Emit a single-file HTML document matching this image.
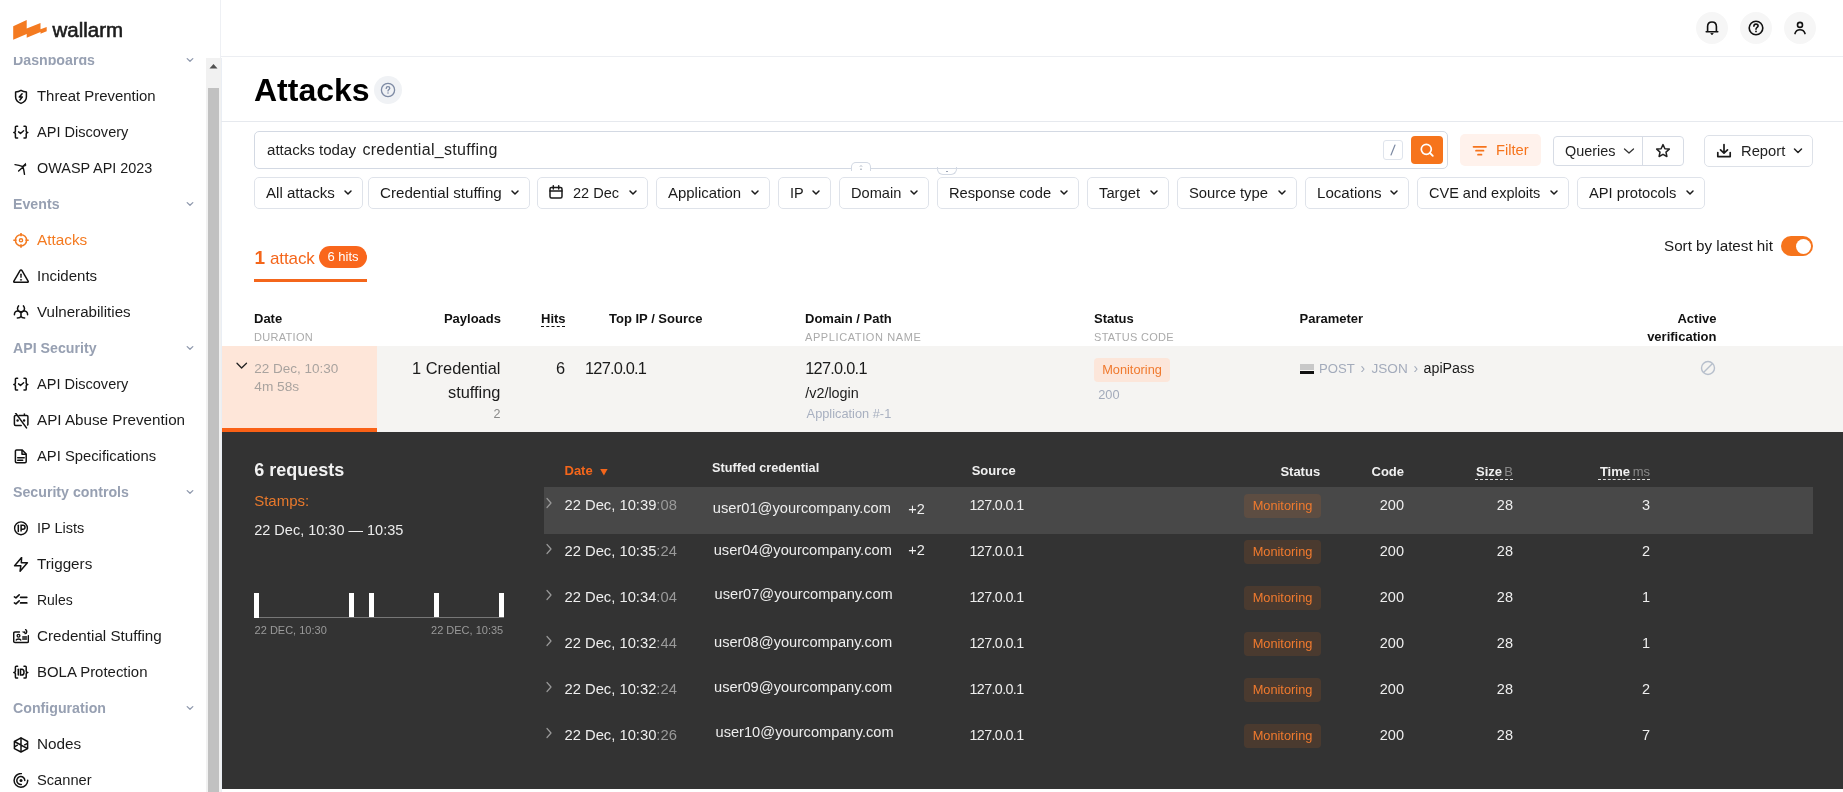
<!DOCTYPE html>
<html><head><meta charset="utf-8"><title>Attacks</title>
<style>
html,body{margin:0;padding:0;}
body{will-change:transform;width:1843px;height:792px;overflow:hidden;position:relative;background:#fff;font-family:"Liberation Sans", sans-serif;}
.t{position:absolute;white-space:pre;line-height:1;}
.r{position:absolute;box-sizing:border-box;}
</style></head><body>
<div class="r" style="left:220px;top:0px;width:1px;height:792px;background:#eef0f4;"></div>
<svg class="r" style="left:0px;top:0px;" width="60" height="50" viewBox="0 0 60 50" fill="none"><polygon fill="#f47a20" points="13.2,26.2 26.7,20.1 26.7,28.6 40.5,23 40.5,29.2 46.7,26.9 46.7,31.3 40.5,33.75 40.5,32 26.7,37.7 26.7,33.9 13.2,39.8"/></svg>
<div class="t" style="top:20px;font-size:20.5px;color:#1c1c1c;font-weight:400;left:52.5px;-webkit-text-stroke:0.6px #1c1c1c;">wallarm</div>
<div class="t" style="top:53px;font-size:14.2px;color:#97a0b2;font-weight:700;left:13px;transform-origin:0 100%;transform:scaleY(1.08);">Dashboards</div>
<svg class="r" style="left:184px;top:56px;" width="12" height="8" viewBox="0 0 12 8" fill="none"><path d="M3.2 2.6 L6 5.3 L8.8 2.6" stroke="#8f99ad" stroke-width="1.3" stroke-linecap="round" stroke-linejoin="round"/></svg>
<div class="t" style="top:89px;font-size:14.93px;color:#1b1b1b;font-weight:400;left:37px;">Threat Prevention</div>
<svg class="r" style="left:13px;top:88.5px;" width="16" height="16" viewBox="0 0 16 16" fill="none"><path d="M8 1.3 C6.3 2.4 4.4 2.9 2.6 3 V8 C2.6 11 5 13.3 8 14.4 C11 13.3 13.4 11 13.4 8 V3 C11.6 2.9 9.7 2.4 8 1.3 Z" stroke="#111" stroke-width="1.5" stroke-linejoin="round"/><path d="M9.1 4.8 L6.3 8.1 H9.3 L6.9 10.9" stroke="#111" stroke-width="1.5" stroke-linejoin="round" stroke-linecap="round"/></svg>
<div class="t" style="top:125px;font-size:14.56px;color:#1b1b1b;font-weight:400;left:37px;">API Discovery</div>
<svg class="r" style="left:13px;top:124.5px;" width="16" height="16" viewBox="0 0 16 16" fill="none"><path d="M4.6 1.2 H3.3 C2.8 1.2 2.4 1.6 2.4 2.1 V6.3 C2.4 7 2 7.5 0.8 7.5 C2 7.5 2.4 8 2.4 8.7 V12.2 C2.4 12.7 2.8 13.1 3.3 13.1 H4.6 M11 1.2 H12.3 C12.8 1.2 13.2 1.6 13.2 2.1 V6.3 C13.2 7 13.6 7.5 14.8 7.5 C13.6 7.5 13.2 8 13.2 8.7 V12.2 C13.2 12.7 12.8 13.1 12.3 13.1 H11" stroke="#111" stroke-width="1.5" stroke-linecap="round" stroke-linejoin="round"/><path d="M5.6 6.9 L7.5 8.5 L10.6 5.8" stroke="#111" stroke-width="1.5" stroke-linecap="round" stroke-linejoin="round"/></svg>
<div class="t" style="top:161px;font-size:14.42px;color:#1b1b1b;font-weight:400;left:37px;">OWASP API 2023</div>
<svg class="r" style="left:13px;top:160.5px;" width="16" height="16" viewBox="0 0 16 16" fill="none"><path d="M2 3.6 C5 3.9 7.5 4.6 10 5.6 M5.6 10 L9.8 6.2 M10 6 C10.8 8.5 11.2 11 11.5 13.3" stroke="#111" stroke-width="1.4" stroke-linecap="round"/><path d="M9 5.8 L12.5 2.4 L12.8 4.6 Z" fill="#111" stroke="#111" stroke-width="1" stroke-linejoin="round"/></svg>
<div class="t" style="top:197px;font-size:14.2px;color:#97a0b2;font-weight:700;left:13px;transform-origin:0 100%;transform:scaleY(1.08);">Events</div>
<svg class="r" style="left:184px;top:200px;" width="12" height="8" viewBox="0 0 12 8" fill="none"><path d="M3.2 2.6 L6 5.3 L8.8 2.6" stroke="#8f99ad" stroke-width="1.3" stroke-linecap="round" stroke-linejoin="round"/></svg>
<div class="t" style="top:232px;font-size:15.33px;color:#f47a20;font-weight:400;left:37px;">Attacks</div>
<svg class="r" style="left:13px;top:232.5px;" width="16" height="16" viewBox="0 0 16 16" fill="none"><circle cx="8" cy="7.3" r="5.6" stroke="#f47a20" stroke-width="1.5"/><circle cx="8" cy="7.3" r="1.6" stroke="#f47a20" stroke-width="1.4"/><path d="M8 0 V3.3 M8 11.3 V14.8 M0.3 7.3 H3.6 M12.4 7.3 H15.7" stroke="#f47a20" stroke-width="1.6"/></svg>
<div class="t" style="top:268px;font-size:15.03px;color:#1b1b1b;font-weight:400;left:37px;">Incidents</div>
<svg class="r" style="left:13px;top:268.5px;" width="16" height="16" viewBox="0 0 16 16" fill="none"><path d="M7 1.6 C7.4 0.9 8.6 0.9 9 1.6 L15.1 12.2 C15.5 12.9 15 13.3 14.4 13.3 H1.6 C1 13.3 0.5 12.9 0.9 12.2 Z" stroke="#111" stroke-width="1.5" stroke-linejoin="round"/><path d="M8 5.2 V8.2" stroke="#111" stroke-width="1.4" stroke-linecap="round"/><path d="M7.4 10.8 H8.6" stroke="#111" stroke-width="1.2" stroke-linecap="round"/></svg>
<div class="t" style="top:304px;font-size:15.13px;color:#1b1b1b;font-weight:400;left:37px;">Vulnerabilities</div>
<svg class="r" style="left:13px;top:304.5px;" width="16" height="16" viewBox="0 0 16 16" fill="none"><path d="M5.5 0.9 C4 2.6 4.2 5.5 6.3 6.6 C7.3 7.1 8.7 7.1 9.7 6.6 C11.8 5.5 12 2.6 10.5 0.9" stroke="#111" stroke-width="1.5" stroke-linecap="round"/><path d="M1.4 9.8 C1.3 7.3 3.1 5.6 5.2 6 C6.4 6.2 7.5 6.8 8 7.2 C8.5 6.8 9.6 6.2 10.8 6 C12.9 5.6 14.7 7.3 14.6 9.8" stroke="#111" stroke-width="1.5" stroke-linecap="round"/><path d="M8 7 V11.5 M4.4 13 C6 13 7.5 12.5 8 11.3 C8.5 12.5 10 13 11.6 13" stroke="#111" stroke-width="1.6" stroke-linecap="round"/></svg>
<div class="t" style="top:341px;font-size:14.2px;color:#97a0b2;font-weight:700;left:13px;transform-origin:0 100%;transform:scaleY(1.08);">API Security</div>
<svg class="r" style="left:184px;top:344px;" width="12" height="8" viewBox="0 0 12 8" fill="none"><path d="M3.2 2.6 L6 5.3 L8.8 2.6" stroke="#8f99ad" stroke-width="1.3" stroke-linecap="round" stroke-linejoin="round"/></svg>
<div class="t" style="top:377px;font-size:14.56px;color:#1b1b1b;font-weight:400;left:37px;">API Discovery</div>
<svg class="r" style="left:13px;top:376.5px;" width="16" height="16" viewBox="0 0 16 16" fill="none"><path d="M4.6 1.2 H3.3 C2.8 1.2 2.4 1.6 2.4 2.1 V6.3 C2.4 7 2 7.5 0.8 7.5 C2 7.5 2.4 8 2.4 8.7 V12.2 C2.4 12.7 2.8 13.1 3.3 13.1 H4.6 M11 1.2 H12.3 C12.8 1.2 13.2 1.6 13.2 2.1 V6.3 C13.2 7 13.6 7.5 14.8 7.5 C13.6 7.5 13.2 8 13.2 8.7 V12.2 C13.2 12.7 12.8 13.1 12.3 13.1 H11" stroke="#111" stroke-width="1.5" stroke-linecap="round" stroke-linejoin="round"/><path d="M5.6 6.9 L7.5 8.5 L10.6 5.8" stroke="#111" stroke-width="1.5" stroke-linecap="round" stroke-linejoin="round"/></svg>
<div class="t" style="top:412px;font-size:15.23px;color:#1b1b1b;font-weight:400;left:37px;">API Abuse Prevention</div>
<svg class="r" style="left:13px;top:412.5px;" width="16" height="16" viewBox="0 0 16 16" fill="none"><path d="M3.2 2.4 H2.6 C2 2.4 1.4 3 1.4 3.6 V11.2 C1.4 11.8 2 12.4 2.6 12.4 H8.2 M6 2.4 H13.7 C14.3 2.4 14.9 3 14.9 3.6 V11.2 C14.9 11.5 14.8 11.8 14.6 12" stroke="#111" stroke-width="1.5" stroke-linecap="round"/><path d="M11.4 2.4 V0.4" stroke="#111" stroke-width="1.4"/><path d="M2.4 -0.2 L13.5 14.9" stroke="#111" stroke-width="1.5" stroke-linecap="round"/><circle cx="4.6" cy="7.5" r="1.2" fill="#111"/><circle cx="11.1" cy="7.5" r="1.2" fill="#111"/></svg>
<div class="t" style="top:449px;font-size:14.79px;color:#1b1b1b;font-weight:400;left:37px;">API Specifications</div>
<svg class="r" style="left:13px;top:448.5px;" width="16" height="16" viewBox="0 0 16 16" fill="none"><path d="M3.6 0.9 H9 L13.2 5 V12.6 C13.2 13.3 12.7 13.8 12 13.8 H3.6 C2.9 13.8 2.4 13.3 2.4 12.6 V2.1 C2.4 1.4 2.9 0.9 3.6 0.9 Z" stroke="#111" stroke-width="1.5" stroke-linejoin="round"/><path d="M9 0.9 V5.3 H13.2" stroke="#111" stroke-width="1.5" stroke-linejoin="round"/><path d="M4.7 8.8 H11.2 M4.7 11.3 H9.7" stroke="#111" stroke-width="1.5" stroke-linecap="round"/></svg>
<div class="t" style="top:485px;font-size:14.2px;color:#97a0b2;font-weight:700;left:13px;transform-origin:0 100%;transform:scaleY(1.08);">Security controls</div>
<svg class="r" style="left:184px;top:488px;" width="12" height="8" viewBox="0 0 12 8" fill="none"><path d="M3.2 2.6 L6 5.3 L8.8 2.6" stroke="#8f99ad" stroke-width="1.3" stroke-linecap="round" stroke-linejoin="round"/></svg>
<div class="t" style="top:521px;font-size:14.49px;color:#1b1b1b;font-weight:400;left:37px;">IP Lists</div>
<svg class="r" style="left:13px;top:520.5px;" width="16" height="16" viewBox="0 0 16 16" fill="none"><circle cx="8" cy="7.3" r="6.4" stroke="#111" stroke-width="1.4"/><path d="M5.3 4.3 V10.6" stroke="#111" stroke-width="1.5" stroke-linecap="round"/><path d="M8.1 10.6 V4.3 H10 C11.3 4.3 12 5.1 12 6.3 C12 7.5 11.3 8.3 10 8.3 H8.1" stroke="#111" stroke-width="1.5"/></svg>
<div class="t" style="top:556px;font-size:15.22px;color:#1b1b1b;font-weight:400;left:37px;">Triggers</div>
<svg class="r" style="left:13px;top:556.5px;" width="16" height="16" viewBox="0 0 16 16" fill="none"><path d="M8.6 0.5 L1.6 8.8 H7.8 L7.1 14.2 L14.4 5.8 H8.3 Z" stroke="#111" stroke-width="1.5" stroke-linejoin="round"/></svg>
<div class="t" style="top:594px;font-size:13.97px;color:#1b1b1b;font-weight:400;left:37px;">Rules</div>
<svg class="r" style="left:13px;top:592.5px;" width="16" height="16" viewBox="0 0 16 16" fill="none"><path d="M1.4 3.9 L2.9 4.9 L6.2 1.9 M1.4 9.9 L2.9 10.9 L6.2 7.9" stroke="#111" stroke-width="1.6" stroke-linecap="round" stroke-linejoin="round"/><path d="M7.6 4.3 H13.8 M7.6 9.9 H13.8" stroke="#111" stroke-width="1.7" stroke-linecap="round"/></svg>
<div class="t" style="top:628px;font-size:15.19px;color:#1b1b1b;font-weight:400;left:37px;">Credential Stuffing</div>
<svg class="r" style="left:13px;top:628.5px;" width="16" height="16" viewBox="0 0 16 16" fill="none"><path d="M6.4 3 H2 C1.2 3 0.7 3.5 0.7 4.3 V12.2 C0.7 13 1.2 13.5 2 13.5 H14.1 C14.9 13.5 15.4 13 15.4 12.2 V6.8" stroke="#111" stroke-width="1.5" stroke-linecap="round"/><circle cx="5.5" cy="6.8" r="1.4" stroke="#111" stroke-width="1.3"/><path d="M3.2 11 C3.6 9.6 7.4 9.6 7.8 11" stroke="#111" stroke-width="1.4" stroke-linecap="round"/><path d="M9.7 8 H13.6 M9.7 10 H13.6" stroke="#111" stroke-width="1.4" stroke-linecap="round"/><path d="M12.6 0.7 C14.2 1.5 14.1 4.4 12.2 4.6" stroke="#111" stroke-width="1.4" stroke-linecap="round"/><path d="M8.6 2.7 L12.4 4.8 L12.3 2.2 Z" fill="#111"/></svg>
<div class="t" style="top:665px;font-size:14.94px;color:#1b1b1b;font-weight:400;left:37px;">BOLA Protection</div>
<svg class="r" style="left:13px;top:664.5px;" width="16" height="16" viewBox="0 0 16 16" fill="none"><path d="M4.6 1.2 H3.3 C2.8 1.2 2.4 1.6 2.4 2.1 V6.3 C2.4 7 2 7.5 0.8 7.5 C2 7.5 2.4 8 2.4 8.7 V12.2 C2.4 12.7 2.8 13.1 3.3 13.1 H4.6 M11 1.2 H12.3 C12.8 1.2 13.2 1.6 13.2 2.1 V6.3 C13.2 7 13.6 7.5 14.8 7.5 C13.6 7.5 13.2 8 13.2 8.7 V12.2 C13.2 12.7 12.8 13.1 12.3 13.1 H11" stroke="#111" stroke-width="1.5" stroke-linecap="round" stroke-linejoin="round"/><path d="M5.3 4.3 V10.1" stroke="#111" stroke-width="1.5" stroke-linecap="round"/><path d="M7.5 4.3 V10.1 H8.8 C10.3 10.1 11 9 11 7.2 C11 5.4 10.3 4.3 8.8 4.3 Z" stroke="#111" stroke-width="1.5"/></svg>
<div class="t" style="top:701px;font-size:14.2px;color:#97a0b2;font-weight:700;left:13px;transform-origin:0 100%;transform:scaleY(1.08);">Configuration</div>
<svg class="r" style="left:184px;top:704px;" width="12" height="8" viewBox="0 0 12 8" fill="none"><path d="M3.2 2.6 L6 5.3 L8.8 2.6" stroke="#8f99ad" stroke-width="1.3" stroke-linecap="round" stroke-linejoin="round"/></svg>
<div class="t" style="top:736px;font-size:15.3px;color:#1b1b1b;font-weight:400;left:37px;">Nodes</div>
<svg class="r" style="left:13px;top:736.5px;" width="16" height="16" viewBox="0 0 16 16" fill="none"><path d="M8 0.8 L14.6 4.5 V11.6 L8 15 L1.4 11.6 V4.5 Z" stroke="#111" stroke-width="1.5" stroke-linejoin="round"/><path d="M8 0.8 V15 M1.4 4.5 L14.6 11.6 M14.6 6.3 L11.2 8.2 M1.4 9.8 L4.8 7.9" stroke="#111" stroke-width="1.5"/></svg>
<div class="t" style="top:773px;font-size:14.66px;color:#1b1b1b;font-weight:400;left:37px;">Scanner</div>
<svg class="r" style="left:13px;top:772.5px;" width="16" height="16" viewBox="0 0 16 16" fill="none"><path d="M8.3 0.6 A6.8 6.8 0 1 0 14.7 7.3" stroke="#111" stroke-width="1.5" stroke-linecap="round"/><path d="M8.3 11.5 A4 4 0 1 1 11.8 7.5" stroke="#111" stroke-width="1.5" stroke-linecap="round"/><circle cx="8" cy="7.5" r="1.5" fill="#111"/></svg>
<div class="r" style="left:0px;top:0px;width:220px;height:57px;background:#fff;"></div>
<svg class="r" style="left:0px;top:0px;" width="60" height="50" viewBox="0 0 60 50" fill="none"><polygon fill="#f47a20" points="13.2,26.2 26.7,20.1 26.7,28.6 40.5,23 40.5,29.2 46.7,26.9 46.7,31.3 40.5,33.75 40.5,32 26.7,37.7 26.7,33.9 13.2,39.8"/></svg>
<div class="t" style="top:20px;font-size:20.5px;color:#1c1c1c;font-weight:400;left:52.5px;-webkit-text-stroke:0.6px #1c1c1c;">wallarm</div>
<div class="r" style="left:206px;top:58px;width:15px;height:734px;background:#f1f1f1;"></div>
<svg class="r" style="left:206px;top:58px;" width="15" height="20" viewBox="0 0 15 20" fill="none"><path d="M3.5 10.5 L7.5 6 L11.5 10.5 Z" fill="#505050"/></svg>
<div class="r" style="left:208px;top:88px;width:11px;height:704px;background:#c1c1c1;"></div>
<div class="r" style="left:221px;top:58px;width:1px;height:734px;background:#eaeef4;"></div>
<div class="r" style="left:221px;top:56px;width:1622px;height:1px;background:#eceef2;"></div>
<div class="r" style="left:1695.5px;top:11.5px;width:32px;height:32px;background:#f6f6f6;border-radius:50%;"></div>
<div class="r" style="left:1739.5px;top:11.5px;width:32px;height:32px;background:#f6f6f6;border-radius:50%;"></div>
<div class="r" style="left:1783.5px;top:11.5px;width:32px;height:32px;background:#f6f6f6;border-radius:50%;"></div>
<svg class="r" style="left:1703.7px;top:19.5px;" width="16" height="16" viewBox="0 0 16 16" fill="none"><path d="M3.6 11.6 V6.6 C3.6 3.9 5.4 2 8 2 C10.6 2 12.4 3.9 12.4 6.6 V11.6 M2.2 11.8 H13.8" stroke="#111" stroke-width="1.6" stroke-linecap="round"/><path d="M6.8 13.5 H9.2 L8 14.8 Z" fill="#111" stroke="#111" stroke-width="0.8" stroke-linejoin="round"/></svg>
<svg class="r" style="left:1748px;top:19.5px;" width="16" height="16" viewBox="0 0 16 16" fill="none"><circle cx="8" cy="8" r="6.8" stroke="#111" stroke-width="1.6"/><path d="M5.9 6.2 C5.9 4.9 6.9 4.1 8 4.1 C9.2 4.1 10.1 4.9 10.1 6 C10.1 7.4 8 7.6 8 9.2" stroke="#111" stroke-width="1.6" stroke-linecap="round"/><circle cx="8" cy="11.4" r="0.9" fill="#111"/></svg>
<svg class="r" style="left:1791.5px;top:19.5px;" width="16" height="16" viewBox="0 0 16 16" fill="none"><circle cx="8" cy="4.9" r="2.5" stroke="#111" stroke-width="1.6"/><path d="M3 13.6 C3.8 10.9 5.6 9.7 8 9.7 C10.4 9.7 12.2 10.9 13 13.6" stroke="#111" stroke-width="1.6" stroke-linecap="round"/></svg>
<div class="t" style="top:74px;font-size:32px;color:#000;font-weight:700;left:254px;">Attacks</div>
<div class="r" style="left:374px;top:76px;width:28px;height:28px;background:#f0f2f5;border-radius:50%;"></div>
<svg class="r" style="left:380px;top:82px;" width="16" height="16" viewBox="0 0 16 16" fill="none"><circle cx="8" cy="8" r="6.6" stroke="#7d8aa3" stroke-width="1.3"/><path d="M6.2 6.4 C6.2 5.3 7 4.6 8 4.6 C9 4.6 9.8 5.3 9.8 6.2 C9.8 7.3 8 7.6 8 8.9" stroke="#7d8aa3" stroke-width="1.3" stroke-linecap="round"/><circle cx="8" cy="11" r="0.75" fill="#7d8aa3"/></svg>
<div class="r" style="left:221px;top:121px;width:1622px;height:1px;background:#e6e9ee;"></div>
<div class="r" style="left:254px;top:131px;width:1194px;height:38px;border:1px solid #d3d9e3;border-radius:5px;background:#fff;"></div>
<div class="t" style="top:142px;font-size:15.1px;color:#222;font-weight:400;left:267px;">attacks today</div>
<div class="t" style="top:142px;font-size:16px;color:#222;font-weight:400;letter-spacing:0.3px;left:362.4px;">credential_stuffing</div>
<div class="r" style="left:1383px;top:140px;width:20px;height:20px;border:1px solid #dfe4ec;border-radius:3px;"></div>
<svg class="r" style="left:1383px;top:140px;" width="20" height="20" viewBox="0 0 20 20" fill="none"><path d="M12 5 L8 15" stroke="#7d8aa3" stroke-width="1.2" stroke-linecap="round"/></svg>
<div class="r" style="left:1411px;top:136px;width:32px;height:28px;background:#f6741c;border-radius:4px;"></div>
<svg class="r" style="left:1418px;top:141px;" width="18" height="18" viewBox="0 0 18 18" fill="none"><circle cx="8.3" cy="8.3" r="5" stroke="#fff" stroke-width="1.7"/><path d="M12 12 L14.8 14.8" stroke="#fff" stroke-width="1.8" stroke-linecap="round"/></svg>
<div class="r" style="left:1460px;top:134px;width:81px;height:32px;background:#fff2ec;border-radius:5px;"></div>
<svg class="r" style="left:1472px;top:144px;" width="16" height="14" viewBox="0 0 16 14" fill="none"><path d="M1.5 2.8 H14 M4 6.7 H11.5 M6 10.7 H9.5" stroke="#f6741c" stroke-width="1.7" stroke-linecap="round"/></svg>
<div class="t" style="top:143px;font-size:14.7px;color:#f6741c;font-weight:400;left:1496px;">Filter</div>
<div class="r" style="left:1553px;top:136px;width:131px;height:30px;border:1px solid #d7dce5;border-radius:4px;"></div>
<div class="r" style="left:1642px;top:137px;width:1px;height:28px;background:#d7dce5;"></div>
<div class="t" style="top:144px;font-size:14.4px;color:#222;font-weight:400;left:1565px;">Queries</div>
<svg class="r" style="left:1623px;top:147px;" width="12" height="8" viewBox="0 0 12 8" fill="none"><path d="M1.5 2 L6 6 L10.5 2" stroke="#333" stroke-width="1.3" stroke-linecap="round" stroke-linejoin="round"/></svg>
<svg class="r" style="left:1655px;top:143px;" width="16" height="16" viewBox="0 0 16 16" fill="none"><path d="M8 1.6 L9.9 5.7 L14.3 6.1 L11 9.1 L11.9 13.5 L8 11.3 L4.1 13.5 L5 9.1 L1.7 6.1 L6.1 5.7 Z" stroke="#222" stroke-width="1.5" stroke-linejoin="round"/></svg>
<div class="r" style="left:1704px;top:135px;width:109px;height:32px;border:1px solid #dde1e8;border-radius:5px;"></div>
<svg class="r" style="left:1716px;top:143px;" width="16" height="16" viewBox="0 0 16 16" fill="none"><path d="M8 1.5 V10 M4.5 6.8 L8 10.2 L11.5 6.8 M1.8 9.5 V13.6 H14.2 V9.5" stroke="#1b1b1b" stroke-width="1.7" stroke-linecap="round" stroke-linejoin="round"/></svg>
<div class="t" style="top:144px;font-size:14.75px;color:#222;font-weight:400;left:1741px;">Report</div>
<svg class="r" style="left:1792px;top:147px;" width="12" height="8" viewBox="0 0 12 8" fill="none"><path d="M2.5 2 L6 5.5 L9.5 2" stroke="#222" stroke-width="1.5" stroke-linecap="round" stroke-linejoin="round"/></svg>
<div class="r" style="left:851px;top:162px;width:20px;height:9px;border:1px solid #d3d9e3;border-bottom:none;border-radius:5px 5px 0 0;background:#fff;"></div>
<svg class="r" style="left:851px;top:162px;" width="20" height="9" viewBox="0 0 20 9" fill="none"><path d="M9 4.6 L10 3.6 L11 4.6 M9 6.8 L10 7.6 L11 6.8" stroke="#8a94a6" stroke-width="0.8"/></svg>
<div class="r" style="left:937px;top:167px;width:20px;height:8px;border:1px solid #d3d9e3;border-top:none;border-radius:0 0 6px 6px;"></div>
<div class="r" style="left:946px;top:171px;width:2px;height:1px;background:#9aa3b3;"></div>
<div class="r" style="left:254px;top:177px;width:109px;height:32px;border:1px solid #dfe3ea;border-radius:5px;"></div>
<div class="t" style="top:185px;font-size:15.1px;color:#1b1b1b;font-weight:400;left:266px;">All attacks</div>
<svg class="r" style="left:343px;top:189px;" width="10" height="8" viewBox="0 0 10 8" fill="none"><path d="M2 2 L5 5 L8 2" stroke="#1b1b1b" stroke-width="1.5" stroke-linecap="round" stroke-linejoin="round"/></svg>
<div class="r" style="left:368px;top:177px;width:162px;height:32px;border:1px solid #dfe3ea;border-radius:5px;"></div>
<div class="t" style="top:185px;font-size:15.15px;color:#1b1b1b;font-weight:400;left:380px;">Credential stuffing</div>
<svg class="r" style="left:510px;top:189px;" width="10" height="8" viewBox="0 0 10 8" fill="none"><path d="M2 2 L5 5 L8 2" stroke="#1b1b1b" stroke-width="1.5" stroke-linecap="round" stroke-linejoin="round"/></svg>
<div class="r" style="left:537px;top:177px;width:111px;height:32px;border:1px solid #dfe3ea;border-radius:5px;"></div>
<svg class="r" style="left:548px;top:184px;" width="16" height="16" viewBox="0 0 16 16" fill="none"><rect x="2" y="3.5" width="12" height="10.5" rx="1.5" stroke="#1b1b1b" stroke-width="1.5"/><path d="M2 7 H14 M5.3 1.8 V5 M10.7 1.8 V5" stroke="#1b1b1b" stroke-width="1.5" stroke-linecap="round"/></svg>
<div class="t" style="top:186px;font-size:14.55px;color:#1b1b1b;font-weight:400;left:573px;">22 Dec</div>
<svg class="r" style="left:628px;top:189px;" width="10" height="8" viewBox="0 0 10 8" fill="none"><path d="M2 2 L5 5 L8 2" stroke="#1b1b1b" stroke-width="1.5" stroke-linecap="round" stroke-linejoin="round"/></svg>
<div class="r" style="left:656px;top:177px;width:114px;height:32px;border:1px solid #dfe3ea;border-radius:5px;"></div>
<div class="t" style="top:186px;font-size:14.95px;color:#1b1b1b;font-weight:400;left:668px;">Application</div>
<svg class="r" style="left:750px;top:189px;" width="10" height="8" viewBox="0 0 10 8" fill="none"><path d="M2 2 L5 5 L8 2" stroke="#1b1b1b" stroke-width="1.5" stroke-linecap="round" stroke-linejoin="round"/></svg>
<div class="r" style="left:778px;top:177px;width:53px;height:32px;border:1px solid #dfe3ea;border-radius:5px;"></div>
<div class="t" style="top:186px;font-size:14.5px;color:#1b1b1b;font-weight:400;left:790px;">IP</div>
<svg class="r" style="left:811px;top:189px;" width="10" height="8" viewBox="0 0 10 8" fill="none"><path d="M2 2 L5 5 L8 2" stroke="#1b1b1b" stroke-width="1.5" stroke-linecap="round" stroke-linejoin="round"/></svg>
<div class="r" style="left:839px;top:177px;width:90px;height:32px;border:1px solid #dfe3ea;border-radius:5px;"></div>
<div class="t" style="top:186px;font-size:14.6px;color:#1b1b1b;font-weight:400;left:851px;">Domain</div>
<svg class="r" style="left:909px;top:189px;" width="10" height="8" viewBox="0 0 10 8" fill="none"><path d="M2 2 L5 5 L8 2" stroke="#1b1b1b" stroke-width="1.5" stroke-linecap="round" stroke-linejoin="round"/></svg>
<div class="r" style="left:937px;top:177px;width:142px;height:32px;border:1px solid #dfe3ea;border-radius:5px;"></div>
<div class="t" style="top:186px;font-size:14.7px;color:#1b1b1b;font-weight:400;left:949px;">Response code</div>
<svg class="r" style="left:1059px;top:189px;" width="10" height="8" viewBox="0 0 10 8" fill="none"><path d="M2 2 L5 5 L8 2" stroke="#1b1b1b" stroke-width="1.5" stroke-linecap="round" stroke-linejoin="round"/></svg>
<div class="r" style="left:1087px;top:177px;width:82px;height:32px;border:1px solid #dfe3ea;border-radius:5px;"></div>
<div class="t" style="top:186px;font-size:14.75px;color:#1b1b1b;font-weight:400;left:1099px;">Target</div>
<svg class="r" style="left:1149px;top:189px;" width="10" height="8" viewBox="0 0 10 8" fill="none"><path d="M2 2 L5 5 L8 2" stroke="#1b1b1b" stroke-width="1.5" stroke-linecap="round" stroke-linejoin="round"/></svg>
<div class="r" style="left:1177px;top:177px;width:120px;height:32px;border:1px solid #dfe3ea;border-radius:5px;"></div>
<div class="t" style="top:186px;font-size:14.8px;color:#1b1b1b;font-weight:400;left:1189px;">Source type</div>
<svg class="r" style="left:1277px;top:189px;" width="10" height="8" viewBox="0 0 10 8" fill="none"><path d="M2 2 L5 5 L8 2" stroke="#1b1b1b" stroke-width="1.5" stroke-linecap="round" stroke-linejoin="round"/></svg>
<div class="r" style="left:1305px;top:177px;width:104px;height:32px;border:1px solid #dfe3ea;border-radius:5px;"></div>
<div class="t" style="top:185px;font-size:15.1px;color:#1b1b1b;font-weight:400;left:1317px;">Locations</div>
<svg class="r" style="left:1389px;top:189px;" width="10" height="8" viewBox="0 0 10 8" fill="none"><path d="M2 2 L5 5 L8 2" stroke="#1b1b1b" stroke-width="1.5" stroke-linecap="round" stroke-linejoin="round"/></svg>
<div class="r" style="left:1417px;top:177px;width:152px;height:32px;border:1px solid #dfe3ea;border-radius:5px;"></div>
<div class="t" style="top:186px;font-size:14.5px;color:#1b1b1b;font-weight:400;left:1429px;">CVE and exploits</div>
<svg class="r" style="left:1549px;top:189px;" width="10" height="8" viewBox="0 0 10 8" fill="none"><path d="M2 2 L5 5 L8 2" stroke="#1b1b1b" stroke-width="1.5" stroke-linecap="round" stroke-linejoin="round"/></svg>
<div class="r" style="left:1577px;top:177px;width:128px;height:32px;border:1px solid #dfe3ea;border-radius:5px;"></div>
<div class="t" style="top:186px;font-size:14.7px;color:#1b1b1b;font-weight:400;left:1589px;">API protocols</div>
<svg class="r" style="left:1685px;top:189px;" width="10" height="8" viewBox="0 0 10 8" fill="none"><path d="M2 2 L5 5 L8 2" stroke="#1b1b1b" stroke-width="1.5" stroke-linecap="round" stroke-linejoin="round"/></svg>
<div class="t" style="top:248px;font-size:19px;color:#f4661b;font-weight:700;left:254.5px;">1</div>
<div class="t" style="top:250px;font-size:17px;color:#f4661b;font-weight:400;left:270px;letter-spacing:-0.1px;">attack</div>
<div class="r" style="left:319px;top:246px;width:48px;height:22px;background:#f9661c;border-radius:11px;"></div>
<div class="t" style="top:250px;font-size:13px;color:#fff;font-weight:400;left:43px;width:600px;text-align:center;">6 hits</div>
<div class="r" style="left:254px;top:279px;width:113px;height:3px;background:#f4661b;"></div>
<div class="t" style="top:238px;font-size:15.2px;color:#1b1b1b;font-weight:400;left:1664px;">Sort by latest hit</div>
<div class="r" style="left:1781px;top:236px;width:32px;height:20px;background:#f6741c;border-radius:10px;"></div>
<div class="r" style="left:1795.5px;top:238.5px;width:15px;height:15px;background:#fff;border-radius:50%;"></div>
<div class="t" style="top:312px;font-size:13px;color:#111;font-weight:700;left:254px;">Date</div>
<div class="t" style="top:332px;font-size:11px;color:#aaaaaa;font-weight:400;letter-spacing:0.3px;left:254px;">DURATION</div>
<div class="t" style="top:312px;font-size:13px;color:#111;font-weight:700;right:1342px;text-align:right;">Payloads</div>
<div class="t" style="top:312px;font-size:13px;color:#111;font-weight:700;left:541px;">Hits</div>
<div class="r" style="left:541px;top:325.5px;width:24px;height:1px;border-top:1px dashed #111;"></div>
<div class="t" style="top:312px;font-size:13px;color:#111;font-weight:700;left:609px;">Top IP / Source</div>
<div class="t" style="top:312px;font-size:13px;color:#111;font-weight:700;left:805px;">Domain / Path</div>
<div class="t" style="top:332px;font-size:11px;color:#aaaaaa;font-weight:400;letter-spacing:0.6px;left:805px;">APPLICATION NAME</div>
<div class="t" style="top:312px;font-size:13px;color:#111;font-weight:700;left:1094px;">Status</div>
<div class="t" style="top:332px;font-size:11px;color:#aaaaaa;font-weight:400;letter-spacing:0.3px;left:1094px;">STATUS CODE</div>
<div class="t" style="top:312px;font-size:13px;color:#111;font-weight:700;left:1299.5px;">Parameter</div>
<div class="t" style="top:312px;font-size:13px;color:#111;font-weight:700;right:126.5px;text-align:right;">Active</div>
<div class="t" style="top:330px;font-size:13px;color:#111;font-weight:700;right:126.5px;text-align:right;">verification</div>
<div class="r" style="left:222px;top:346px;width:1621px;height:86px;background:#f5f4f2;"></div>
<div class="r" style="left:222px;top:346px;width:155px;height:86px;background:#fee6d9;"></div>
<div class="r" style="left:222px;top:428px;width:155px;height:4px;background:#fa6116;"></div>
<svg class="r" style="left:236px;top:362px;" width="12" height="8" viewBox="0 0 12 8" fill="none"><path d="M1 1.2 L5.6 6 L10.5 1.2" stroke="#222" stroke-width="1.3" stroke-linecap="round" stroke-linejoin="round"/></svg>
<div class="t" style="top:362px;font-size:13.5px;color:#a9a39f;font-weight:400;left:254.3px;">22 Dec, 10:30</div>
<div class="t" style="top:380px;font-size:13.7px;color:#a9a39f;font-weight:400;left:254.3px;">4m 58s</div>
<div class="t" style="top:360px;font-size:16.4px;color:#1b1b1b;font-weight:400;right:1342.5px;text-align:right;">1 Credential</div>
<div class="t" style="top:384px;font-size:16.4px;color:#1b1b1b;font-weight:400;right:1342.5px;text-align:right;">stuffing</div>
<div class="t" style="top:408px;font-size:12.5px;color:#888;font-weight:400;right:1342.5px;text-align:right;">2</div>
<div class="t" style="top:360px;font-size:16.4px;color:#1b1b1b;font-weight:400;right:1278px;text-align:right;">6</div>
<div class="t" style="top:360px;font-size:16.4px;color:#1b1b1b;font-weight:400;letter-spacing:-0.8px;left:585px;">127.0.0.1</div>
<div class="t" style="top:360px;font-size:16.3px;color:#1b1b1b;font-weight:400;letter-spacing:-0.7px;left:805.2px;">127.0.0.1</div>
<div class="t" style="top:386px;font-size:14.4px;color:#1b1b1b;font-weight:400;left:805.2px;">/v2/login</div>
<div class="t" style="top:408px;font-size:12.8px;color:#a8b0c0;font-weight:400;left:806.6px;">Application #-1</div>
<div class="r" style="left:1094px;top:358px;width:76px;height:24px;background:#fce6da;border-radius:4px;"></div>
<div class="t" style="top:364px;font-size:12.8px;color:#f07a2e;font-weight:400;left:832px;width:600px;text-align:center;">Monitoring</div>
<div class="t" style="top:389px;font-size:12.8px;color:#a3abbb;font-weight:400;left:1098.2px;">200</div>
<div class="r" style="left:1299.5px;top:364px;width:14px;height:6px;background:#c8c8c8;"></div>
<div class="r" style="left:1299.5px;top:371px;width:14px;height:2.5px;background:#111;"></div>
<div class="t" style="top:362px;font-size:13.1px;color:#a3abbb;font-weight:400;left:1319px;">POST</div>
<div class="t" style="top:361px;font-size:14px;color:#a3abbb;font-weight:400;left:1360.5px;">›</div>
<div class="t" style="top:362px;font-size:13.6px;color:#a3abbb;font-weight:400;left:1371.5px;">JSON</div>
<div class="t" style="top:361px;font-size:14px;color:#a3abbb;font-weight:400;left:1413.5px;">›</div>
<div class="t" style="top:361px;font-size:14.25px;color:#1b1b1b;font-weight:400;left:1423.6px;">apiPass</div>
<svg class="r" style="left:1700px;top:360px;" width="16" height="16" viewBox="0 0 16 16" fill="none"><circle cx="8" cy="8" r="6.5" stroke="#b7bfcc" stroke-width="1.4"/><path d="M3.5 12.5 L12.5 3.5" stroke="#b7bfcc" stroke-width="1.4"/></svg>
<div class="r" style="left:222px;top:432px;width:1621px;height:357px;background:#333333;"></div>
<div class="t" style="top:461px;font-size:18px;color:#f2f2f2;font-weight:700;left:254.2px;">6 requests</div>
<div class="t" style="top:493px;font-size:15px;color:#e8792c;font-weight:400;left:254.2px;">Stamps:</div>
<div class="t" style="top:523px;font-size:14.5px;color:#ececec;font-weight:400;left:254.2px;">22 Dec, 10:30 — 10:35</div>
<div class="r" style="left:254px;top:593px;width:5px;height:25px;background:#fff;"></div>
<div class="r" style="left:349px;top:593px;width:5px;height:25px;background:#fff;"></div>
<div class="r" style="left:369px;top:593px;width:5px;height:25px;background:#fff;"></div>
<div class="r" style="left:434px;top:593px;width:5px;height:25px;background:#fff;"></div>
<div class="r" style="left:499px;top:593px;width:5px;height:25px;background:#fff;"></div>
<div class="r" style="left:254px;top:617px;width:250px;height:1px;background:#777;"></div>
<div class="r" style="left:254px;top:593px;width:5px;height:25px;background:#fff;"></div>
<div class="t" style="top:625px;font-size:11px;color:#9a9a9a;font-weight:400;left:254.6px;">22 DEC, 10:30</div>
<div class="t" style="top:625px;font-size:11px;color:#9a9a9a;font-weight:400;right:1339.8px;text-align:right;">22 DEC, 10:35</div>
<div class="t" style="top:464px;font-size:13px;color:#f4661b;font-weight:700;left:564.5px;">Date</div>
<svg class="r" style="left:598.5px;top:466.5px;" width="10" height="10" viewBox="0 0 10 10" fill="none"><path d="M1.2 2 H8.6 L4.9 8.5 Z" fill="#f4661b"/></svg>
<div class="t" style="top:462px;font-size:12.7px;color:#f0f0f0;font-weight:700;left:712px;">Stuffed credential</div>
<div class="t" style="top:464px;font-size:13px;color:#f0f0f0;font-weight:700;left:971.7px;">Source</div>
<div class="t" style="top:465px;font-size:13px;color:#f0f0f0;font-weight:700;right:522.9000000000001px;text-align:right;">Status</div>
<div class="t" style="top:465px;font-size:13px;color:#f0f0f0;font-weight:700;right:439px;text-align:right;">Code</div>
<div class="t" style="top:465px;font-size:13px;color:#8a8a8a;font-weight:400;right:330px;text-align:right;">B</div>
<div class="t" style="top:465px;font-size:13px;color:#f0f0f0;font-weight:700;right:341px;text-align:right;">Size</div>
<div class="r" style="left:1475px;top:479px;width:38px;height:1px;border-top:1px dashed #ddd;"></div>
<div class="t" style="top:465px;font-size:13px;color:#8a8a8a;font-weight:400;right:193px;text-align:right;">ms</div>
<div class="t" style="top:465px;font-size:13px;color:#f0f0f0;font-weight:700;right:213px;text-align:right;">Time</div>
<div class="r" style="left:1598px;top:479px;width:52px;height:1px;border-top:1px dashed #ddd;"></div>
<div class="r" style="left:544px;top:487px;width:1269px;height:47px;background:#484848;"></div>
<svg class="r" style="left:543.5px;top:496px;" width="10" height="14" viewBox="0 0 10 14" fill="none"><path d="M3 2.5 L7 7 L3 11.5" stroke="#999" stroke-width="1.2" stroke-linecap="round" stroke-linejoin="round"/></svg>
<div class="t" style="top:498px;font-size:14.75px;color:#eeeeee;font-weight:400;left:564.5px;">22 Dec, 10:39<span style="color:#9a9a9a">:08</span></div>
<div class="t" style="top:501px;font-size:14.65px;color:#eeeeee;font-weight:400;left:712.8px;">user01@yourcompany.com</div>
<div class="t" style="top:502px;font-size:14.5px;color:#eeeeee;font-weight:400;left:908.3px;">+2</div>
<div class="t" style="top:498px;font-size:14.3px;color:#eeeeee;font-weight:400;letter-spacing:-0.62px;left:969.5px;">127.0.0.1</div>
<div class="r" style="left:1244px;top:494px;width:77px;height:24px;background:rgba(246,116,28,0.12);border-radius:4px;"></div>
<div class="t" style="top:500px;font-size:12.8px;color:#f07a2e;font-weight:400;left:982.5px;width:600px;text-align:center;">Monitoring</div>
<div class="t" style="top:498px;font-size:14.5px;color:#eeeeee;font-weight:400;right:439px;text-align:right;">200</div>
<div class="t" style="top:498px;font-size:14.5px;color:#eeeeee;font-weight:400;right:330px;text-align:right;">28</div>
<div class="t" style="top:498px;font-size:14.5px;color:#eeeeee;font-weight:400;right:193px;text-align:right;">3</div>
<svg class="r" style="left:543.5px;top:542px;" width="10" height="14" viewBox="0 0 10 14" fill="none"><path d="M3 2.5 L7 7 L3 11.5" stroke="#999" stroke-width="1.2" stroke-linecap="round" stroke-linejoin="round"/></svg>
<div class="t" style="top:544px;font-size:14.75px;color:#eeeeee;font-weight:400;left:564.5px;">22 Dec, 10:35<span style="color:#9a9a9a">:24</span></div>
<div class="t" style="top:543px;font-size:14.65px;color:#eeeeee;font-weight:400;left:713.7px;">user04@yourcompany.com</div>
<div class="t" style="top:543px;font-size:14.5px;color:#eeeeee;font-weight:400;left:908.3px;">+2</div>
<div class="t" style="top:544px;font-size:14.3px;color:#eeeeee;font-weight:400;letter-spacing:-0.62px;left:969.5px;">127.0.0.1</div>
<div class="r" style="left:1244px;top:540px;width:77px;height:24px;background:rgba(246,116,28,0.12);border-radius:4px;"></div>
<div class="t" style="top:546px;font-size:12.8px;color:#f07a2e;font-weight:400;left:982.5px;width:600px;text-align:center;">Monitoring</div>
<div class="t" style="top:544px;font-size:14.5px;color:#eeeeee;font-weight:400;right:439px;text-align:right;">200</div>
<div class="t" style="top:544px;font-size:14.5px;color:#eeeeee;font-weight:400;right:330px;text-align:right;">28</div>
<div class="t" style="top:544px;font-size:14.5px;color:#eeeeee;font-weight:400;right:193px;text-align:right;">2</div>
<svg class="r" style="left:543.5px;top:588px;" width="10" height="14" viewBox="0 0 10 14" fill="none"><path d="M3 2.5 L7 7 L3 11.5" stroke="#999" stroke-width="1.2" stroke-linecap="round" stroke-linejoin="round"/></svg>
<div class="t" style="top:590px;font-size:14.75px;color:#eeeeee;font-weight:400;left:564.5px;">22 Dec, 10:34<span style="color:#9a9a9a">:04</span></div>
<div class="t" style="top:587px;font-size:14.65px;color:#eeeeee;font-weight:400;left:714.6px;">user07@yourcompany.com</div>
<div class="t" style="top:590px;font-size:14.3px;color:#eeeeee;font-weight:400;letter-spacing:-0.62px;left:969.5px;">127.0.0.1</div>
<div class="r" style="left:1244px;top:586px;width:77px;height:24px;background:rgba(246,116,28,0.12);border-radius:4px;"></div>
<div class="t" style="top:592px;font-size:12.8px;color:#f07a2e;font-weight:400;left:982.5px;width:600px;text-align:center;">Monitoring</div>
<div class="t" style="top:590px;font-size:14.5px;color:#eeeeee;font-weight:400;right:439px;text-align:right;">200</div>
<div class="t" style="top:590px;font-size:14.5px;color:#eeeeee;font-weight:400;right:330px;text-align:right;">28</div>
<div class="t" style="top:590px;font-size:14.5px;color:#eeeeee;font-weight:400;right:193px;text-align:right;">1</div>
<svg class="r" style="left:543.5px;top:634px;" width="10" height="14" viewBox="0 0 10 14" fill="none"><path d="M3 2.5 L7 7 L3 11.5" stroke="#999" stroke-width="1.2" stroke-linecap="round" stroke-linejoin="round"/></svg>
<div class="t" style="top:636px;font-size:14.75px;color:#eeeeee;font-weight:400;left:564.5px;">22 Dec, 10:32<span style="color:#9a9a9a">:44</span></div>
<div class="t" style="top:635px;font-size:14.65px;color:#eeeeee;font-weight:400;left:714.0px;">user08@yourcompany.com</div>
<div class="t" style="top:636px;font-size:14.3px;color:#eeeeee;font-weight:400;letter-spacing:-0.62px;left:969.5px;">127.0.0.1</div>
<div class="r" style="left:1244px;top:632px;width:77px;height:24px;background:rgba(246,116,28,0.12);border-radius:4px;"></div>
<div class="t" style="top:638px;font-size:12.8px;color:#f07a2e;font-weight:400;left:982.5px;width:600px;text-align:center;">Monitoring</div>
<div class="t" style="top:636px;font-size:14.5px;color:#eeeeee;font-weight:400;right:439px;text-align:right;">200</div>
<div class="t" style="top:636px;font-size:14.5px;color:#eeeeee;font-weight:400;right:330px;text-align:right;">28</div>
<div class="t" style="top:636px;font-size:14.5px;color:#eeeeee;font-weight:400;right:193px;text-align:right;">1</div>
<svg class="r" style="left:543.5px;top:680px;" width="10" height="14" viewBox="0 0 10 14" fill="none"><path d="M3 2.5 L7 7 L3 11.5" stroke="#999" stroke-width="1.2" stroke-linecap="round" stroke-linejoin="round"/></svg>
<div class="t" style="top:682px;font-size:14.75px;color:#eeeeee;font-weight:400;left:564.5px;">22 Dec, 10:32<span style="color:#9a9a9a">:24</span></div>
<div class="t" style="top:680px;font-size:14.65px;color:#eeeeee;font-weight:400;left:714.0px;">user09@yourcompany.com</div>
<div class="t" style="top:682px;font-size:14.3px;color:#eeeeee;font-weight:400;letter-spacing:-0.62px;left:969.5px;">127.0.0.1</div>
<div class="r" style="left:1244px;top:678px;width:77px;height:24px;background:rgba(246,116,28,0.12);border-radius:4px;"></div>
<div class="t" style="top:684px;font-size:12.8px;color:#f07a2e;font-weight:400;left:982.5px;width:600px;text-align:center;">Monitoring</div>
<div class="t" style="top:682px;font-size:14.5px;color:#eeeeee;font-weight:400;right:439px;text-align:right;">200</div>
<div class="t" style="top:682px;font-size:14.5px;color:#eeeeee;font-weight:400;right:330px;text-align:right;">28</div>
<div class="t" style="top:682px;font-size:14.5px;color:#eeeeee;font-weight:400;right:193px;text-align:right;">2</div>
<svg class="r" style="left:543.5px;top:726px;" width="10" height="14" viewBox="0 0 10 14" fill="none"><path d="M3 2.5 L7 7 L3 11.5" stroke="#999" stroke-width="1.2" stroke-linecap="round" stroke-linejoin="round"/></svg>
<div class="t" style="top:728px;font-size:14.75px;color:#eeeeee;font-weight:400;left:564.5px;">22 Dec, 10:30<span style="color:#9a9a9a">:26</span></div>
<div class="t" style="top:725px;font-size:14.65px;color:#eeeeee;font-weight:400;left:715.5px;">user10@yourcompany.com</div>
<div class="t" style="top:728px;font-size:14.3px;color:#eeeeee;font-weight:400;letter-spacing:-0.62px;left:969.5px;">127.0.0.1</div>
<div class="r" style="left:1244px;top:724px;width:77px;height:24px;background:rgba(246,116,28,0.12);border-radius:4px;"></div>
<div class="t" style="top:730px;font-size:12.8px;color:#f07a2e;font-weight:400;left:982.5px;width:600px;text-align:center;">Monitoring</div>
<div class="t" style="top:728px;font-size:14.5px;color:#eeeeee;font-weight:400;right:439px;text-align:right;">200</div>
<div class="t" style="top:728px;font-size:14.5px;color:#eeeeee;font-weight:400;right:330px;text-align:right;">28</div>
<div class="t" style="top:728px;font-size:14.5px;color:#eeeeee;font-weight:400;right:193px;text-align:right;">7</div>
</body></html>
